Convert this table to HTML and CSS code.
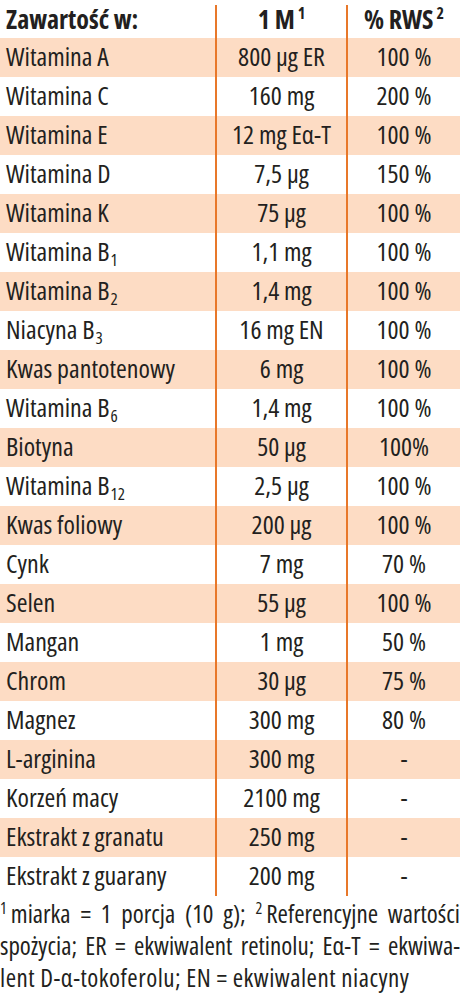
FILE: index.html
```html
<!DOCTYPE html>
<html lang="pl">
<head>
  <meta charset="UTF-8" />
  <meta name="viewport" content="width=device-width, initial-scale=1.0"/>
  <title>Zawartość</title>
  <link rel="stylesheet" href="styles.css">
</head>
<body>
  <div class="sheet">
    <table class="facts">
      <thead>
        <tr>
          <th class="name">Zawartość w:</th>
          <th>1 M<sup>1</sup></th>
          <th>% RWS<sup>2</sup></th>
        </tr>
      </thead>
      <tbody>
        <tr class="shade"><td class="name">Witamina A</td><td>800 µg ER</td><td>100 %</td></tr>
        <tr><td class="name">Witamina C</td><td>160 mg</td><td>200 %</td></tr>
        <tr class="shade"><td class="name">Witamina E</td><td>12 mg Eα-T</td><td>100 %</td></tr>
        <tr><td class="name">Witamina D</td><td>7,5 µg</td><td>150 %</td></tr>
        <tr class="shade"><td class="name">Witamina K</td><td>75 µg</td><td>100 %</td></tr>
        <tr><td class="name">Witamina B<sub>1</sub></td><td>1,1 mg</td><td>100 %</td></tr>
        <tr class="shade"><td class="name">Witamina B<sub>2</sub></td><td>1,4 mg</td><td>100 %</td></tr>
        <tr><td class="name">Niacyna B<sub>3</sub></td><td>16 mg EN</td><td>100 %</td></tr>
        <tr class="shade"><td class="name">Kwas pantotenowy</td><td>6 mg</td><td>100 %</td></tr>
        <tr><td class="name">Witamina B<sub>6</sub></td><td>1,4 mg</td><td>100 %</td></tr>
        <tr class="shade"><td class="name">Biotyna</td><td>50 µg</td><td>100%</td></tr>
        <tr><td class="name">Witamina B<sub>12</sub></td><td>2,5 µg</td><td>100 %</td></tr>
        <tr class="shade"><td class="name">Kwas foliowy</td><td>200 µg</td><td>100 %</td></tr>
        <tr><td class="name">Cynk</td><td>7 mg</td><td>70 %</td></tr>
        <tr class="shade"><td class="name">Selen</td><td>55 µg</td><td>100 %</td></tr>
        <tr><td class="name">Mangan</td><td>1 mg</td><td>50 %</td></tr>
        <tr class="shade"><td class="name">Chrom</td><td>30 µg</td><td>75 %</td></tr>
        <tr><td class="name">Magnez</td><td>300 mg</td><td>80 %</td></tr>
        <tr class="shade"><td class="name">L-arginina</td><td>300 mg</td><td>-</td></tr>
        <tr><td class="name">Korzeń macy</td><td>2100 mg</td><td>-</td></tr>
        <tr class="shade"><td class="name">Ekstrakt z granatu</td><td>250 mg</td><td>-</td></tr>
        <tr><td class="name">Ekstrakt z guarany</td><td>200 mg</td><td>-</td></tr>
      </tbody>
    </table>

    <div class="notes">
      <span class="line just"><sup>1</sup>miarka = 1 porcja (10 g); <sup>2</sup>Referencyjne wartości</span>
      <span class="line just">spożycia; ER = ekwiwalent retinolu; Eα-T = ekwiwa-</span>
      <span class="line last">lent D-α-tokoferolu; EN = ekwiwalent niacyny</span>
    </div>
  </div>
</body>
</html>
```

FILE: styles.css
```css
* { margin: 0; padding: 0; box-sizing: border-box; }

html, body {
  width: 100%;
  background: #fff;
  color: #231f20;
  font-family: "Open Sans", Roboto, sans-serif;
  font-stretch: 75%;
}

.sheet {
  width: 460px;
  padding-top: 5px;
}

.facts {
  width: 100%;
  border-collapse: collapse;
  table-layout: fixed;
  font-size: 26px;
}

.facts th,
.facts td {
  text-align: center;
  border-left: 2px solid #e8782a;
  white-space: nowrap;
  padding: 0;
}

.facts th:nth-child(1) { width: 216px; }
.facts th:nth-child(2) { width: 131px; }

.facts th.name,
.facts td.name {
  text-align: left;
  border-left: none;
  padding-left: 6px;
}

.facts thead tr { height: 33px; }
.facts thead th {
  font-weight: bold;
  vertical-align: top;
  line-height: 28px;
}

.facts tbody tr { height: 39px; }
.facts tbody td {
  line-height: 30px;
  padding-bottom: 4px;
}

.facts tr.shade { background: #fddcc4; }

sup {
  font-size: 16px;
  vertical-align: 10px;
  line-height: 0;
  margin-left: 3px;
}

sub {
  font-size: 17px;
  vertical-align: -5px;
  line-height: 0;
  margin-left: 1px;
}

.notes {
  font-size: 25px;
  line-height: 32px;
  padding-top: 1px;
}

.notes .line { display: block; white-space: nowrap; }
.notes .just { text-align: justify; text-align-last: justify; }
.notes .last { letter-spacing: 0.5px; }

.notes sup {
  font-size: 16px;
  vertical-align: 9px;
  margin-left: 0;
  margin-right: 4px;
}
```
